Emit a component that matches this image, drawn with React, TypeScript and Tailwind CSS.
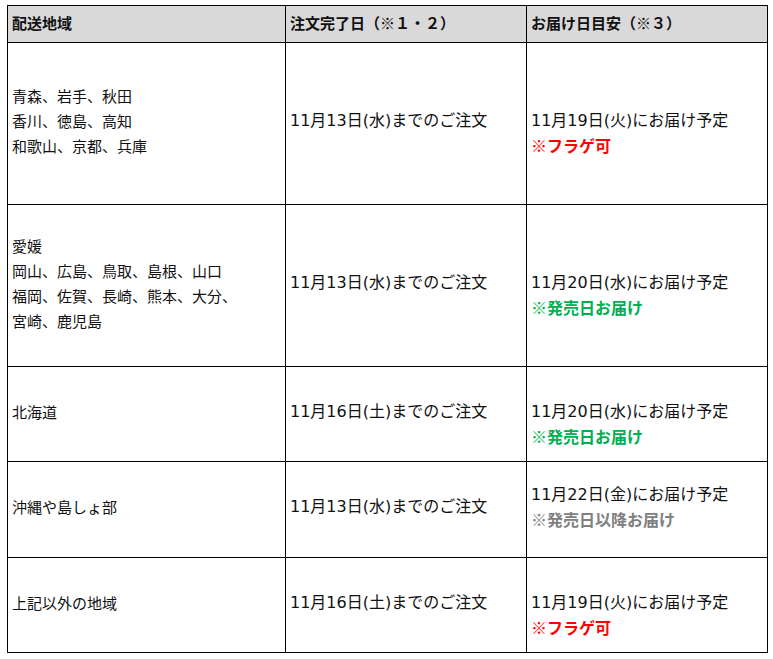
const rows = [
  {
    area: ['青森、岩手、秋田', '香川、徳島、高知', '和歌山、京都、兵庫'],
    order: '11月13日(水)までのご注文',
    date: '11月19日(火)にお届け予定',
    note: '※フラゲ可',
    noteColor: 'text-[#ff0000]',
    pad: true,
    h: 'h-[162px]',
  },
  {
    area: ['愛媛', '岡山、広島、鳥取、島根、山口', '福岡、佐賀、長崎、熊本、大分、', '宮崎、鹿児島'],
    order: '11月13日(水)までのご注文',
    date: '11月20日(水)にお届け予定',
    note: '※発売日お届け',
    noteColor: 'text-[#00b050]',
    pad: true,
    h: 'h-[162px]',
  },
  {
    area: ['北海道'],
    order: '11月16日(土)までのご注文',
    date: '11月20日(水)にお届け予定',
    note: '※発売日お届け',
    noteColor: 'text-[#00b050]',
    pad: true,
    h: 'h-[95px]',
  },
  {
    area: ['沖縄や島しょ部'],
    order: '11月13日(水)までのご注文',
    date: '11月22日(金)にお届け予定',
    note: '※発売日以降お届け',
    noteColor: 'text-[#808080]',
    pad: false,
    h: 'h-[96px]',
  },
  {
    area: ['上記以外の地域'],
    order: '11月16日(土)までのご注文',
    date: '11月19日(火)にお届け予定',
    note: '※フラゲ可',
    noteColor: 'text-[#ff0000]',
    pad: true,
    h: 'h-[95px]',
  },
]

// wider latin digits like the original page's font, CJK from Noto
const dateFont = { fontFamily: '"DejaVu Sans", "Noto Sans CJK JP", sans-serif' }

export default function App() {
  return (
    <div
      className="bg-white min-h-[659px] pt-[5px] pl-[7px] text-[#111] text-[15px] leading-[25px]"
      style={{ fontFamily: '"Noto Sans CJK JP", "Noto Sans", sans-serif' }}
    >
      <table className="table-fixed border-collapse w-[760px]">
        <colgroup>
          <col className="w-[278px]" />
          <col className="w-[241px]" />
          <col className="w-[241px]" />
        </colgroup>
        <thead>
          <tr className="h-[37px] bg-[#d9d9d9]">
            <th className="border border-black px-[4px] pb-[3px] text-left align-middle font-bold">配送地域</th>
            <th className="border border-black px-[4px] pb-[3px] text-left align-middle font-bold">注文完了日（※１・２）</th>
            <th className="border border-black px-[4px] pb-[3px] text-left align-middle font-bold">お届け日目安（※３）</th>
          </tr>
        </thead>
        <tbody>
          {rows.map((row, i) => (
            <tr key={i} className={row.h}>
              <td className="border border-black px-[4px] pb-[6px] align-middle">
                {row.area.map((line) => (
                  <div key={line}>{line}</div>
                ))}
              </td>
              <td className="border border-black px-[4px] pb-[6px] align-middle text-[16px]" style={dateFont}>
                {row.order}
              </td>
              <td className="border border-black px-[4px] pb-[6px] align-middle text-[16px]">
                {row.pad && <div className="h-[25px]" />}
                <div style={dateFont}>{row.date}</div>
                <div className={`font-bold ${row.noteColor}`}>{row.note}</div>
              </td>
            </tr>
          ))}
        </tbody>
      </table>
    </div>
  )
}
